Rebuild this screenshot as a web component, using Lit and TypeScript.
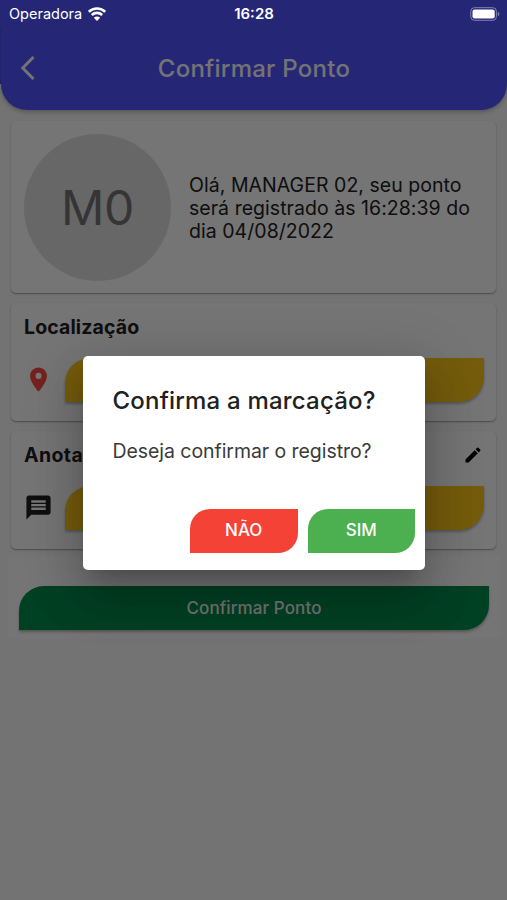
import { LitElement, html, css } from "lit";
import { customElement } from "lit/decorators.js";

@customElement("app-root")
export class AppRoot extends LitElement {
  static styles = css`
    :host { display: block; position: relative; width: 507px; height: 900px; overflow: hidden;
      background: #fafafa; font-family: Inter, "Liberation Sans", sans-serif; color: #212121; }
    * { box-sizing: border-box; }
    .page { display: flex; flex-direction: column; }
    header { height: 110px; padding-top: 26px; background: linear-gradient(#5254ff 84px, transparent 84px); }
    .bar { height: 84px; margin: 0 0 0 1px; border-radius: 0 0 26px 26px; background: #5254ff; display: grid;
      grid-template-columns: 48px 1fr 48px; align-items: center; box-shadow: 0 2px 4px rgba(0,0,0,.25); color: #fafafa; }
    .back { margin-left: 18px; display: block; }
    .title { text-align: center; font-size: 24px; font-weight: 500; letter-spacing: .25px; white-space: nowrap; }
    .cards { display: flex; flex-direction: column; gap: 10px; padding: 11px 11px 0; }
    .card { height: 118px; background: #fff; border-radius: 5px; padding: 13px 12px 0 13px;
      box-shadow: 0 1px 2px rgba(0,0,0,.28), 0 1px 1px rgba(0,0,0,.1); }
    .hello { height: 172px; display: flex; padding-top: 13px; gap: 18px; }
    .avatar { width: 147px; height: 147px; border-radius: 50%; background: #e0e0e0; color: #757575;
      font-size: 48px; letter-spacing: -.4px; display: flex; align-items: center; justify-content: center; }
    .greeting { font-size: 19.5px; line-height: 23px; letter-spacing: .04px; margin: 40px 0 0; white-space: nowrap; }
    .head { display: flex; justify-content: space-between; height: 42px; font-size: 19.5px; font-weight: 700;
      letter-spacing: .12px; line-height: 22px; }
    .note { letter-spacing: .4px; }
    .head svg { margin: 1px 1px 0 0; }
    .row { display: flex; align-items: center; gap: 12px; }
    .row svg { margin-top: -2px; }
    .field { flex: 1; height: 44px; background: #ffc81c; border-radius: 25px 0 25px 0; box-shadow: 0 2px 3px rgba(0,0,0,.28); }
    .footer { height: 82px; margin: 7px 7px 0 8px; padding: 30px 11px 0; background: #fff; }
    .submit { height: 44px; border-radius: 25px 0 25px 0; background: #008c4c; color: #fafafa; text-align: center;
      font-size: 17px; font-weight: 500; letter-spacing: .1px; line-height: 44px; box-shadow: 0 2px 3px rgba(0,0,0,.28); }
    .scrim { position: absolute; inset: 0; background: rgba(0,0,0,.54); }
    .status { position: absolute; inset: 0 0 auto; height: 27px; display: grid; grid-template-columns: 1fr 60px 1fr;
      align-items: center; color: #fff; font-size: 14.5px; padding: 0 7px 0 9px; }
    .carrier { display: flex; align-items: center; gap: 6px; }
    .clock { text-align: center; font-weight: 600; font-size: 15px; margin-left: -1px; }
    .battery { justify-self: end; }
    .dialog { position: absolute; left: 83px; top: 356px; width: 342px; height: 214px; border-radius: 5px; background: #fff;
      padding: 30px 10px 0 29.5px; box-shadow: 0 14px 19px -9px rgba(0,0,0,.2), 0 30px 48px 4px rgba(0,0,0,.14), 0 11px 57px 10px rgba(0,0,0,.12); }
    .dialog h2 { margin: 0; font-size: 24px; line-height: 30px; font-weight: 450; letter-spacing: .2px; white-space: nowrap; }
    .dialog p { margin: 23px 0 0; font-size: 19.5px; line-height: 24px; letter-spacing: -.06px; color: #3a3a3a; white-space: nowrap; }
    .actions { display: flex; justify-content: flex-end; gap: 10px; margin-top: 45.5px; }
    .btn { width: 107.5px; height: 44px; border-radius: 20px 0 20px 0; color: #fff; font-size: 17px; font-weight: 550;
      text-align: center; line-height: 43px; }
    .no { background: #f44336; }
    .yes { background: #4caf50; }
  `;

  render() {
    return html`
      <div class="page">
        <header>
          <div class="bar">
            <svg class="back" width="18" height="26" viewBox="0 0 18 26" fill="none" stroke="currentColor" stroke-width="3"><path d="M14.500 2 3.800 13l10.700 11"/></svg>
            <div class="title">Confirmar Ponto</div>
          </div>
        </header>
        <div class="cards">
          <div class="card hello">
            <div class="avatar">M0</div>
            <p class="greeting">Olá, MANAGER 02, seu ponto<br>será registrado às 16:28:39 do<br>dia 04/08/2022</p>
          </div>
          <div class="card">
            <div class="head">Localização</div>
            <div class="row">
              <svg width="29" height="29" viewBox="0 0 24 24" fill="#ff4a45"><path d="M12 2C8.13 2 5 5.13 5 9c0 5.25 7 13 7 13s7-7.75 7-13c0-3.87-3.13-7-7-7zm0 9.5a2.5 2.5 0 0 1 0-5 2.5 2.5 0 0 1 0 5z"/></svg>
              <div class="field"></div>
            </div>
          </div>
          <div class="card">
            <div class="head note">Anotação
              <svg width="20" height="20" viewBox="0 0 24 24" fill="#000"><path d="M3 17.25V21h3.75L17.81 9.94l-3.75-3.75L3 17.25zM20.71 7.04a1 1 0 0 0 0-1.41l-2.34-2.34a1 1 0 0 0-1.41 0l-1.83 1.83 3.75 3.75 1.83-1.83z"/></svg>
            </div>
            <div class="row">
              <svg width="29" height="29" viewBox="0 0 24 24" fill="#212121"><path d="M20 2H4c-1.1 0-1.99.9-1.99 2L2 22l4-4h14c1.1 0 2-.9 2-2V4c0-1.1-.9-2-2-2zm-2 12H6v-2h12v2zm0-3H6V9h12v2zm0-3H6V6h12v2z"/></svg>
              <div class="field"></div>
            </div>
          </div>
        </div>
        <div class="footer"><div class="submit">Confirmar Ponto</div></div>
      </div>
      <div class="scrim"></div>
      <div class="status">
        <div class="carrier">Operadora
          <svg width="18" height="14" viewBox="0 0 18 14" fill="none" stroke="#fff" stroke-width="2.6"><path d="M.8 4.8a11.7 11.7 0 0 1 16.4 0M3.8 8a7.5 7.5 0 0 1 10.4 0"/><path fill="#fff" stroke="none" d="M9 14 5.8 10.700a4.600 4.600 0 0 1 6.400 0z"/></svg>
        </div>
        <div class="clock">16:28</div>
        <svg class="battery" width="30" height="14" viewBox="0 0 30 14"><rect x=".8" y=".7" width="25.600" height="12.600" rx="3.600" fill="none" stroke="#8283b5"/><rect x="2.500" y="2.400" width="22.200" height="9.200" rx="2" fill="#fff"/><path d="M27.800 4.800c2 .8 2 3.600 0 4.400z" fill="#8283b5"/></svg>
      </div>
      <div class="dialog">
        <h2>Confirma a marcação?</h2>
        <p>Deseja confirmar o registro?</p>
        <div class="actions"><div class="btn no">NÃO</div><div class="btn yes">SIM</div></div>
      </div>
    `;
  }
}
